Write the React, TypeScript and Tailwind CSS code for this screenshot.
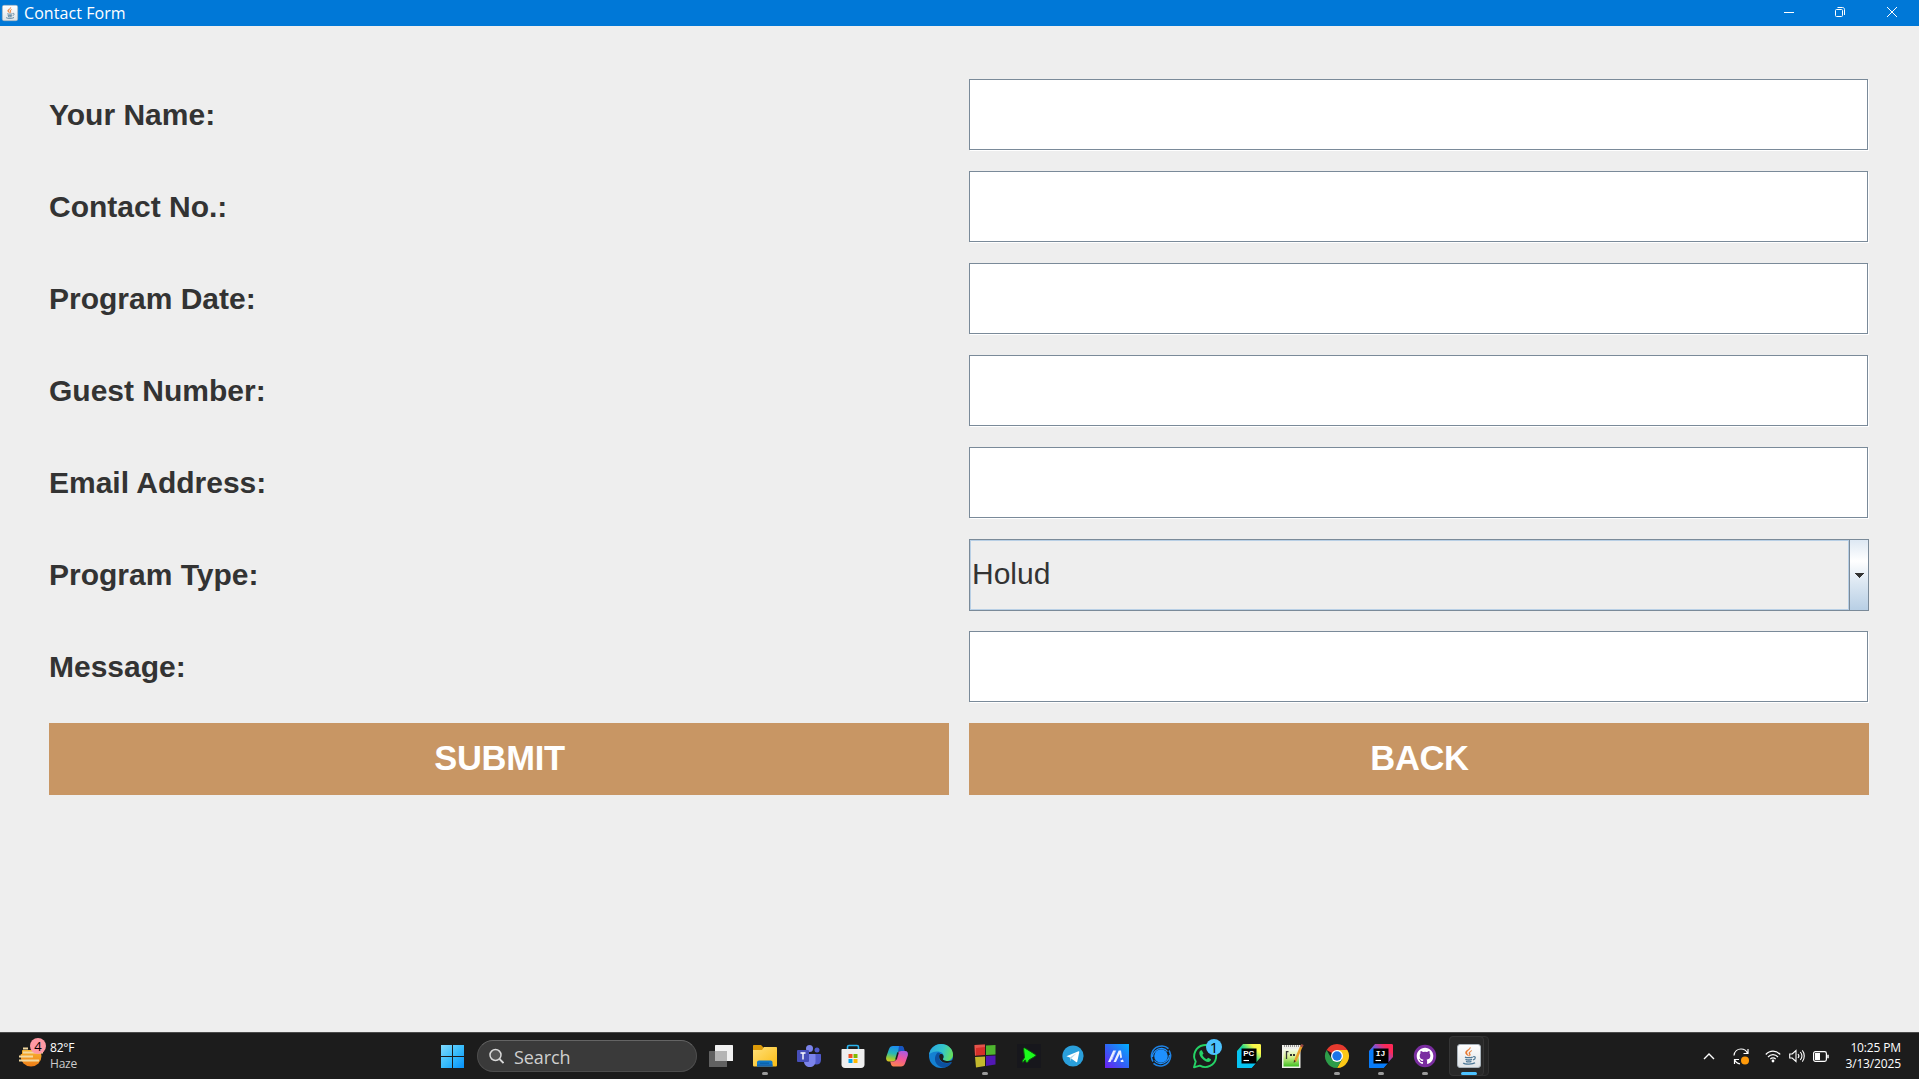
import type { ReactNode } from "react";

const fields = ["Your Name:", "Contact No.:", "Program Date:", "Guest Number:", "Email Address:"];

const labelClass = "flex items-center h-[72px] pb-px text-[30px] font-bold leading-none text-[#333333]";
const inputClass =
  "block h-[71px] w-[899px] rounded-none border border-[#7a8a99] bg-white px-1 text-[30px] text-[#333333] shadow-[1px_1px_0_#ffffff] outline-none";
const buttonClass = "h-[72px] bg-[#c89664] pb-[2px] pl-px text-[34.5px] font-bold leading-none tracking-[-0.3px] text-white";

function Icon({ children, size = 24 }: { children: ReactNode; size?: number }) {
  return (
    <svg viewBox="0 0 24 24" width={size} height={size} fill="none" className="block shrink-0 overflow-visible">
      {children}
    </svg>
  );
}

function JavaCup() {
  return (
    <>
      <path d="M13.2 3.2c1 2-3.7 3.6-3.3 5.8.2 1.100 1.400 1.800 1.800 3-1.800-.9-3.700-2-3.200-4 .5-1.800 4.300-2.600 4.700-4.800Z" fill="#e8762c" stroke="#e8762c" strokeWidth=".4" />
      <path d="M15 6.400c-1.600.7-3.400 1.500-3.100 3 .2.900 1.100 1.300.5 2.800 1.400-.9 1-1.800.5-2.700-.4-1 .8-2 2.100-3.100Z" fill="#e8762c" stroke="#e8762c" strokeWidth=".4" />
      <path d="M8 13.100c1.500.8 6 .8 7.700 0M8.400 15.300c1.700.7 5 .7 6.600 0M9 17.300c1.400.6 4 .6 5.400 0" stroke="#4e7896" strokeWidth="1.300" />
      <path d="M16.200 12.700c2.700-.8 2.900 2.300-.2 3.100" stroke="#4e7896" strokeWidth="1.200" />
      <path d="M6.200 19c1.500 1.400 9.800 1.400 11.800-.2" stroke="#4e7896" strokeWidth="1.300" />
    </>
  );
}

function JavaIcon({ size = 24 }: { size?: number }) {
  return (
    <Icon size={size}>
      <defs>
        <linearGradient id="jv" x1="0" y1="0" x2="0" y2="1">
          <stop stopColor="#ffffff" />
          <stop offset="1" stopColor="#dfe3e6" />
        </linearGradient>
      </defs>
      <rect x=".5" y=".5" width="23" height="23" rx="2.500" fill="url(#jv)" stroke="#a9b3bb" />
      <JavaCup />
    </Icon>
  );
}

const WindowsIcon = () => (
  <Icon>
    <defs>
      <linearGradient id="win" x1="0" y1="0" x2="23" y2="23" gradientUnits="userSpaceOnUse">
        <stop stopColor="#86dcff" />
        <stop offset=".55" stopColor="#38bcfb" />
        <stop offset="1" stopColor="#0a94fa" />
      </linearGradient>
    </defs>
    <path d="M1 1h11v11H1ZM13 1h11v11H13ZM1 13h11v11H1ZM13 13h11v11H13Z" fill="url(#win)" />
  </Icon>
);

const TaskViewIcon = () => (
  <Icon>
    <rect x="6" y="1" width="18" height="16" rx=".5" fill="#f1f1f1" />
    <rect x="0" y="7" width="18" height="16" rx=".5" fill="#616161" />
    <rect x="6" y="7" width="12" height="10" fill="#b4b4b4" />
  </Icon>
);

const ExplorerIcon = () => (
  <Icon>
    <defs>
      <linearGradient id="fold" x1="0" y1="0" x2="1" y2="1">
        <stop stopColor="#ffe07a" />
        <stop offset="1" stopColor="#fbbc14" />
      </linearGradient>
    </defs>
    <path d="M0 2c0-.6.500-1 1-1h7l3 3v4H0Z" fill="#dc9a08" />
    <path d="M0 6h9l2-3h12c.6 0 1 .4 1 1v17c0 1-.5 1.500-1.500 1.500h-21C.5 22.500 0 22 0 21Z" fill="url(#fold)" />
    <path d="M4 22.500V18.500c0-1.200.8-2 2-2h11.500c1.200 0 2 .8 2 2v4Z" fill="#0f78c8" />
    <path d="M4 22.500v-2h15.500v2Z" fill="#1b63aa" />
    <path d="M7 19.200h9" stroke="#0a5b9f" />
  </Icon>
);

const TeamsIcon = () => (
  <Icon>
    <circle cx="12.500" cy="4.500" r="3.500" fill="#7b83eb" />
    <circle cx="20" cy="6" r="2.500" fill="#5059c9" />
    <path d="M16 10h7c.6 0 1 .4 1 1v5c0 3-2 4.500-4.500 4.500S16 19 16 17Z" fill="#5059c9" />
    <path d="M7 10h10.500c.6 0 1 .4 1 1v6.500c0 3.500-2.500 5.500-5.700 5.500S7 21 7 17.500Z" fill="#7b83eb" />
    <rect x="0" y="6" width="12" height="12" rx="1" fill="#464eb8" />
    <path d="M3.500 9h5M6 9v6.500" stroke="#fff" strokeWidth="1.400" />
  </Icon>
);

const StoreIcon = () => (
  <Icon>
    <path d="M6.500 7V3c0-1 .5-1.500 1.500-1.500h8c1 0 1.500.5 1.500 1.500v4" stroke="#2ab4ee" strokeWidth="1.600" />
    <path d="M.5 6c0-.6.400-1 1-1h21c.6 0 1 .4 1 1v14.500c0 2-1.300 3.500-3.500 3.500H4c-2.200 0-3.500-1.500-3.500-3.500Z" fill="#efefef" />
    <path d="M7.500 10h4v4h-4Z" fill="#f25022" />
    <path d="M12.500 10h4v4h-4Z" fill="#7fba00" />
    <path d="M7.500 15h4v4h-4Z" fill="#00a4ef" />
    <path d="M12.500 15h4v4h-4Z" fill="#ffb900" />
  </Icon>
);

const CopilotIcon = () => (
  <Icon>
    <defs>
      <linearGradient id="cpa" x1="8" y1="2" x2="5" y2="18" gradientUnits="userSpaceOnUse">
        <stop stopColor="#1c8df0" />
        <stop offset=".45" stopColor="#28b7b5" />
        <stop offset=".75" stopColor="#8fcb3c" />
        <stop offset="1" stopColor="#e8c71e" />
      </linearGradient>
      <linearGradient id="cpb" x1="18" y1="6" x2="13" y2="23" gradientUnits="userSpaceOnUse">
        <stop stopColor="#a45bea" />
        <stop offset=".5" stopColor="#f0559c" />
        <stop offset="1" stopColor="#fb8250" />
      </linearGradient>
    </defs>
    <path d="M8 2h8c1.200 0 2 .7 2.400 2l.8 3H15c-1.300 0-2 .8-2.300 2l-1.600 5.500c-.6 2-1.700 3-3.700 3H4C1.800 17.500.6 15.500 1.200 13L4 5c.7-2 2-3 4-3Z" fill="url(#cpa)" />
    <path d="M14 2h2.500c1.200 0 2 .7 2.400 2l.8 3H15c-1 0-1.600.3-2 1Z" fill="#1855c0" />
    <path d="M16 22.500H8.500c-1.200 0-2-.7-2.400-2L5.200 17.500H8c1.800 0 2.600-.8 3-2l1.800-6c.5-1.700 1.500-2.500 3.300-2.500H20c2.500 0 3.400 2 2.800 4.500L20 19.500c-.7 2-2 3-4 3Z" fill="url(#cpb)" />
    <path d="m11 15.500 2-7" stroke="#1c1c1c" strokeWidth="1.600" />
  </Icon>
);

const EdgeIcon = () => (
  <Icon>
    <defs>
      <linearGradient id="ea" x1="1" y1="5" x2="23" y2="12" gradientUnits="userSpaceOnUse">
        <stop stopColor="#2aa9e0" />
        <stop offset=".55" stopColor="#35c6c8" />
        <stop offset="1" stopColor="#67e05a" />
      </linearGradient>
    </defs>
    <circle cx="12" cy="12" r="12" fill="#1481d2" />
    <path d="M0 11C1 4 6 0 12 0c7 0 12 5 12 10.500 0 4-3 6.500-6.500 6.500-2.500 0-4-1-3.500-2.200 2-3-.3-7.300-5-7.300C4.500 7.500 1 9 0 11Z" fill="url(#ea)" />
    <path d="M9 8.500c-4 2.500-5.500 13 5.500 15.200C20 23 22.500 19.500 23 18c-7 3.300-14-.5-13-6 .2-1.600 1.300-2.500 1.300-2.500S10.200 8.300 9 8.500Z" fill="#0c50a0" />
    <path d="M10.200 11.500c-.9 5.500 5.500 9 11.500 6.800l1.400-.5c.5-.7.900-1.500.9-2.300-1.500 1.300-4 1.800-6.500 1.500-3-.3-4-1.200-3.500-2.200.9-1.400.8-3.200-.3-4.300-1.400-.8-3-.4-3.500 1Z" fill="#1c1c1c" />
  </Icon>
);

const BlocksIcon = () => (
  <Icon>
    <path d="M1.500 1 12 .5V11l-10 .8Z" fill="#d5302a" />
    <path d="M13 1.500 22.500 1v9.500L13 11Z" fill="#4fb52f" />
    <path d="M2 13l10-.5V22l-9 1.500Z" fill="#c4b92e" />
    <path d="M13 12l9.500-.5v9L13 22Z" fill="#5218b4" />
    <path d="M1.500 1 12 .5V3L3 4v7.500H2Z" fill="#ef6c63" opacity=".6" />
  </Icon>
);

const GreenPlayIcon = () => (
  <Icon>
    <rect width="24" height="24" fill="#17171c" />
    <path d="M6.500 4.500c.5-.8 1-.6 2-.1l9.700 6c.8.6.8 1.300 0 1.900L12 16c-.5 2-2 3-3 2.200-.6-.7.2-1.800-.8-2.200-1 0-1.300 2.500-2.500 2.200-1-.8.3-3 1.800-4.200Z" fill="#1cfb1c" stroke="#0a5f0c" strokeWidth="1" />
  </Icon>
);

const TelegramIcon = () => (
  <Icon>
    <circle cx="12" cy="12" r="10.600" fill="#2a9fdb" />
    <path d="M5.400 12.200 17.500 7.300c.5-.2.900.2.800.8l-2 9.500c-.1.700-.6.800-1.200.4l-6.300-4.600Z" fill="#fff" />
    <path d="m8.800 13.400 7-4.500-5.500 5.500-.4 3Z" fill="#b8d8e9" />
  </Icon>
);

const ArmouryIcon = () => (
  <Icon>
    <defs>
      <linearGradient id="ma" x1="0" y1="1" x2="1" y2="0">
        <stop stopColor="#6d1df2" />
        <stop offset=".5" stopColor="#2f66f5" />
        <stop offset="1" stopColor="#00b0ff" />
      </linearGradient>
    </defs>
    <rect width="24" height="24" fill="url(#ma)" />
    <path d="M3 18 8.200 6.500h2.500L5.600 18ZM8.500 18l5.200-11.500H16l1 7-1.700.8-.6-4.300L11 18ZM15.500 16.500l2.500-1 .7 2.500h-2.800Z" fill="#eaf0ff" />
    <path d="m6.800 16 4-9.500" stroke="#c5d3ff" strokeWidth=".8" />
  </Icon>
);

const SwirlIcon = () => (
  <Icon>
    <circle cx="12" cy="12" r="6.800" fill="#1e90ff" />
    <path d="M4 17.500C.5 12 3 4.500 9.500 2.500 13 1.400 17 2.300 19.500 4.600" stroke="#1e83e6" strokeWidth="1.500" />
    <path d="M20 6.500c3.500 5.500 1 13-5.500 15-3.500 1.100-7.500.2-10-2.100" stroke="#1e83e6" strokeWidth="1.500" />
    <path d="M3.500 13C3.500 8.500 8 4 13 4.500c2.500.2 4.500 1.500 5.500 3" stroke="#1e90ff" strokeWidth="1.300" />
    <path d="M20.500 11c0 4.500-4.500 9-9.500 8.500-2.500-.2-4.500-1.500-5.500-3" stroke="#1e90ff" strokeWidth="1.300" />
  </Icon>
);

const WhatsAppIcon = () => (
  <Icon>
    <path d="M1 23.300 2.700 17.600A11 11 0 1 1 6.900 21.700Z" stroke="#25d366" strokeWidth="1.900" strokeLinejoin="round" />
    <path d="M8.800 6.300c-.9-.5-2.500.8-2.500 2.700 0 3.800 5.200 8.900 8.800 8.900 1.800 0 3-1.300 2.900-2.600l-2.900-1.500-1.500 1.500c-1.700-.6-3.500-2.400-4.200-4.200l1.100-1.600Z" fill="#25d366" />
  </Icon>
);

function JetBrainsIcon({ kind }: { kind: "PC" | "IJ" }) {
  const pc = kind === "PC";
  return (
    <Icon>
      <defs>
        <linearGradient id={pc ? "jbp" : "jbi"} x1="0" y1="1" x2="1" y2="0">
          <stop offset=".2" stopColor={pc ? "#07c3f2" : "#087cfa"} />
          <stop offset=".55" stopColor={pc ? "#21d789" : "#7a55d8"} />
          <stop offset=".8" stopColor={pc ? "#fcf84a" : "#fe2857"} />
        </linearGradient>
      </defs>
      <path d="M6 0h16.500c1 0 1.500.5 1.500 1.500V13l-5 5.500-4.500 5.500H1.500C.5 24 0 23.500 0 22.500V7Z" fill={pc ? "url(#jbp)" : "url(#jbi)"} />
      <path d="M0 7.500 5 4v15h14l-4.500 5h-13C.5 24 0 23.500 0 22.500Z" fill={pc ? "#07c3f2" : "#087cfa"} />
      <rect x="4.500" y="4.500" width="15" height="15" fill="#000" />
      <text x={pc ? 6.200 : 6.800} y="12.400" fontSize="8" fontWeight="700" fill="#fff" fontFamily={pc ? "Liberation Sans, sans-serif" : "Liberation Mono, monospace"}>
        {kind}
      </text>
      <path d="M6.500 16.500H12" stroke="#fff" strokeWidth="1.100" />
    </Icon>
  );
}

const NotepadIcon = () => (
  <Icon>
    <defs>
      <linearGradient id="np" x1="0" y1="0" x2="0" y2="1">
        <stop stopColor="#f6faee" />
        <stop offset=".45" stopColor="#d6f08e" />
        <stop offset="1" stopColor="#3fbf22" />
      </linearGradient>
    </defs>
    <rect x="1" y="1" width="18.500" height="23" fill="#f0f0ea" />
    <rect x="2.500" y="5" width="15.500" height="17.500" fill="url(#np)" />
    <path d="M3 2h15" stroke="#777" strokeWidth="1.500" strokeDasharray="1 1" />
    <path d="M5.500 7v8M5.500 7.600h2" stroke="#333" strokeWidth="1.300" />
    <path d="M9 11h5.500" stroke="#333" strokeWidth="2" strokeDasharray="2 1" />
    <path d="m20.500 2-6.500 15.500" stroke="#e9a02a" strokeWidth="2.500" />
    <path d="m21.500.5-1 2.500" stroke="#9a4a43" strokeWidth="2.500" />
    <path d="m13 16-.3 3 2.300-2Z" fill="#443322" />
  </Icon>
);

const ChromeIcon = () => (
  <Icon>
    <path d="M12 12 1.600 6a12 12 0 0 1 20.800 0H12Z" fill="#e53a2e" />
    <path d="M12 12V6h10.400A12 12 0 0 1 12 24l5.200-9Z" fill="#fbc816" />
    <path d="M1.600 6 6.800 15 12 18l5.200-3L12 24A12 12 0 0 1 1.600 6Z" fill="#2d9c49" />
    <circle cx="12" cy="12" r="6" fill="#fff" />
    <circle cx="12" cy="12" r="4.700" fill="#1b74e8" />
  </Icon>
);

const GitHubIcon = () => (
  <Icon>
    <circle cx="12" cy="12" r="11.200" fill="#7a2da0" />
    <path
      transform="translate(3.700 3.700) scale(1.040)"
      d="M8 0C3.580 0 0 3.580 0 8c0 3.540 2.290 6.530 5.470 7.590.4.070.55-.17.55-.38 0-.19-.01-.82-.01-1.490-2.010.37-2.530-.49-2.690-.94-.09-.23-.48-.94-.82-1.130-.28-.15-.68-.52-.01-.53.63-.01 1.080.58 1.230.82.72 1.210 1.870.87 2.330.66.07-.52.28-.87.51-1.070-1.780-.2-3.640-.89-3.640-3.950 0-.87.31-1.590.82-2.150-.08-.2-.36-1.020.08-2.120 0 0 .67-.21 2.200.82a7.600 7.600 0 0 1 4 0c1.530-1.040 2.200-.82 2.200-.82.44 1.100.16 1.920.08 2.120.51.56.82 1.270.82 2.150 0 3.070-1.870 3.750-3.650 3.950.29.25.54.73.54 1.480 0 1.070-.01 1.930-.01 2.200 0 .21.15.46.55.38A8 8 0 0 0 16 8c0-4.420-3.580-8-8-8Z"
      fill="#fff"
    />
  </Icon>
);

function TaskbarApp({ children, running }: { children: ReactNode; running?: boolean }) {
  return (
    <div className="relative flex h-full w-11 items-center justify-center">
      {children}
      {running && <span className="absolute bottom-1 left-[19px] h-[3px] w-1.5 rounded-full bg-[#9a9a9a]" />}
    </div>
  );
}

function TitleBar() {
  return (
    <header className="flex h-[26px] items-center bg-[#0078d7] pl-[2px] text-white">
      <JavaIcon size={16} />
      <span className="ml-[6px] font-['Open_Sans','Noto_Sans',sans-serif] text-[16px] leading-none tracking-[0.07px]">Contact Form</span>
      <div className="ml-auto flex h-full items-center pb-[2px]">
        <div className="flex w-[52px] justify-center">
          <svg width="10" height="10"><path d="M0 5.500h10" stroke="#fff" /></svg>
        </div>
        <div className="flex w-[52px] justify-center">
          <svg width="10" height="10" fill="none" stroke="#fff" className="mr-[2px]">
            <rect x=".5" y="2.500" width="7" height="7" rx="1" />
            <path d="M2.500.5h5c1.200 0 2 .8 2 2v5.500" />
          </svg>
        </div>
        <div className="flex w-[52px] justify-center">
          <svg width="10" height="10" className="mr-[2px]"><path d="m0 0 10 10M10 0 0 10" stroke="#fff" /></svg>
        </div>
      </div>
    </header>
  );
}

function Taskbar() {
  return (
    <footer className="flex h-[47px] items-stretch border-t border-[#4a4a4a] bg-[#1c1c1c] font-['Open_Sans','Noto_Sans',sans-serif]">
      <div className="flex w-[431px] items-center pl-[19px]">
        <div className="relative h-7 w-[31px]">
          <svg width="24" height="28" fill="none">
            <defs>
              <linearGradient id="sun" x1="0" y1="0" x2="0" y2="1">
                <stop stopColor="#f8c33a" />
                <stop offset="1" stopColor="#ef7d17" />
              </linearGradient>
            </defs>
            <circle cx="12" cy="14" r="10.500" fill="url(#sun)" />
            <path d="M0 0h24v8H0ZM0 9h3v3H0Z" fill="#1c1c1c" />
            <path d="M4 6.500h5M4 10.500h20M0 14.500h14M0 18.500h20" stroke="#f3d9a0" strokeWidth="1.800" />
          </svg>
          <span className="absolute -top-1 left-[11px] flex size-4 items-center justify-center rounded-full bg-[#ff99a4] text-[13px] leading-none text-black">4</span>
        </div>
        <div className="text-[12px] leading-[16px] tracking-[-0.2px]">
          <div className="font-medium text-white">82°F</div>
          <div className="text-[#cccccc]">Haze</div>
        </div>
      </div>
      <div className="flex w-[46px] items-center pl-[9px]">
        <WindowsIcon />
      </div>
      <div className="mt-[7px] flex h-8 w-[220px] items-center rounded-full border border-[#4d4d4d] border-t-[#646464] bg-[#3a3a3a] pl-[11px]">
        <svg width="15" height="16" fill="none" stroke="#d8d8d8" strokeWidth="1.500">
          <circle cx="6.500" cy="7" r="5.500" fill="#555" />
          <path d="m10.500 11 4 4" strokeWidth="1.800" />
        </svg>
        <span className="ml-[10px] pt-px text-[18px] leading-none tracking-[-0.1px] text-[#cfcfcf]">Search</span>
      </div>
      <div className="ml-[2px] flex">
        <TaskbarApp><TaskViewIcon /></TaskbarApp>
        <TaskbarApp running><ExplorerIcon /></TaskbarApp>
        <TaskbarApp><TeamsIcon /></TaskbarApp>
        <TaskbarApp><StoreIcon /></TaskbarApp>
        <TaskbarApp><CopilotIcon /></TaskbarApp>
        <TaskbarApp><EdgeIcon /></TaskbarApp>
        <TaskbarApp running><BlocksIcon /></TaskbarApp>
        <TaskbarApp><GreenPlayIcon /></TaskbarApp>
        <TaskbarApp><TelegramIcon /></TaskbarApp>
        <TaskbarApp><ArmouryIcon /></TaskbarApp>
        <TaskbarApp><SwirlIcon /></TaskbarApp>
        <TaskbarApp>
          <WhatsAppIcon />
          <span className="absolute left-[23px] top-[6px] flex size-4 items-center justify-center rounded-full bg-[#4cc2ff] text-[15px] leading-none text-black">1</span>
        </TaskbarApp>
        <TaskbarApp><JetBrainsIcon kind="PC" /></TaskbarApp>
        <TaskbarApp><NotepadIcon /></TaskbarApp>
        <TaskbarApp running><ChromeIcon /></TaskbarApp>
        <TaskbarApp running><JetBrainsIcon kind="IJ" /></TaskbarApp>
        <TaskbarApp running><GitHubIcon /></TaskbarApp>
        <div className="relative flex h-full w-11 items-center justify-center">
          <span className="absolute left-[2px] top-[3px] h-10 w-10 rounded-[4px] border border-[#303030] bg-[#232323]" />
          <span className="absolute left-[2px] top-[3px] h-10 w-[35px] rounded-[4px] border border-[#353535] bg-[#292929]" />
          <div className="relative"><JavaIcon /></div>
          <span className="absolute bottom-1 left-[14px] h-[3px] w-4 rounded-full bg-[#4cc2ff]" />
        </div>
      </div>
      <div className="ml-auto flex items-center pr-[18px] text-white">
        <svg width="12" height="8" fill="none" stroke="#fff" strokeWidth="1.400" className="mr-[18px]">
          <path d="m1 7 5-5 5 5" />
        </svg>
        <svg width="16" height="17" fill="none" stroke="#fff" strokeWidth="1.200" className="mr-4">
          <path d="M1 7.500C1.500 3.500 4.500 1 8 1c3 0 5.500 1.500 6.500 4.500M15 1v4.500h-4.500M1.500 16v-4.500H6M1.500 11.500C2.500 14 4.500 15.500 7 15.800" />
          <circle cx="12" cy="12.500" r="4" fill="#ff9a0a" stroke="none" />
        </svg>
        <svg width="16" height="14" fill="none" stroke="#fff" strokeWidth="1.200" className="mr-2">
          <path d="M.8 5.500c4-4.500 10.400-4.500 14.400 0M3 8c2.800-3.100 7.200-3.100 10 0M5.300 10.200c1.500-1.700 3.900-1.700 5.400 0" />
          <circle cx="8" cy="12" r="1.400" fill="#fff" stroke="none" />
        </svg>
        <svg width="16" height="14" fill="none" stroke="#fff" strokeWidth="1.100" className="mr-2">
          <path d="M.7 5h2.500L7 1.500v11L3.200 9H.7ZM9 5c.9 1 .9 3 0 4M11.300 3c1.900 2.300 1.900 5.700 0 8M13.300 1.300c2.600 3 2.600 8.400 0 11.400" />
        </svg>
        <svg width="16" height="11" fill="none" stroke="#fff">
          <rect x=".6" y=".6" width="12.800" height="9.800" rx="1.800" strokeWidth="1.200" />
          <rect x="2" y="2" width="5" height="7" fill="#fff" stroke="none" />
          <path d="M15 3.800v3.400" strokeWidth="1.500" />
        </svg>
        <div className="w-[72px] text-right text-[12px] leading-[16px] tracking-[-0.14px]">
          <div>10:25 PM</div>
          <div>3/13/2025</div>
        </div>
      </div>
    </footer>
  );
}

export default function App() {
  return (
    <div className="flex h-[1079px] w-[1919px] flex-col overflow-hidden bg-[#eeeeee] font-['Liberation_Sans',Arial,sans-serif]">
      <TitleBar />
      <main className="grid flex-1 grid-cols-[900px_900px] content-start gap-5 pl-[49px] pt-[53px]">
        {fields.map((label) => (
          <div key={label} className="contents">
            <label className={labelClass}>{label}</label>
            <input className={inputClass} aria-label={label} />
          </div>
        ))}
        <label className={labelClass}>Program Type:</label>
        <div className="flex h-[72px] border border-[#7a8a99] text-[30px] leading-none text-[#333333]">
          <div className="flex flex-1 items-center border border-[#b8cfe5] pb-[2px] pl-px">Holud</div>
          <div className="flex w-[19px] items-center border-l border-[#7a8a99] bg-[linear-gradient(to_bottom,#dde8f3_0%,#ffffff_30%,#dde8f3_60%,#b8cfe5_100%)] pl-[4px]">
            <svg width="10" height="5" shapeRendering="crispEdges"><path d="M0 0h10L5 5Z" fill="#333333" /></svg>
          </div>
        </div>
        <label className={labelClass}>Message:</label>
        <input className={inputClass} aria-label="Message" />
        <button className={buttonClass}>SUBMIT</button>
        <button className={buttonClass}>BACK</button>
      </main>
      <Taskbar />
    </div>
  );
}
